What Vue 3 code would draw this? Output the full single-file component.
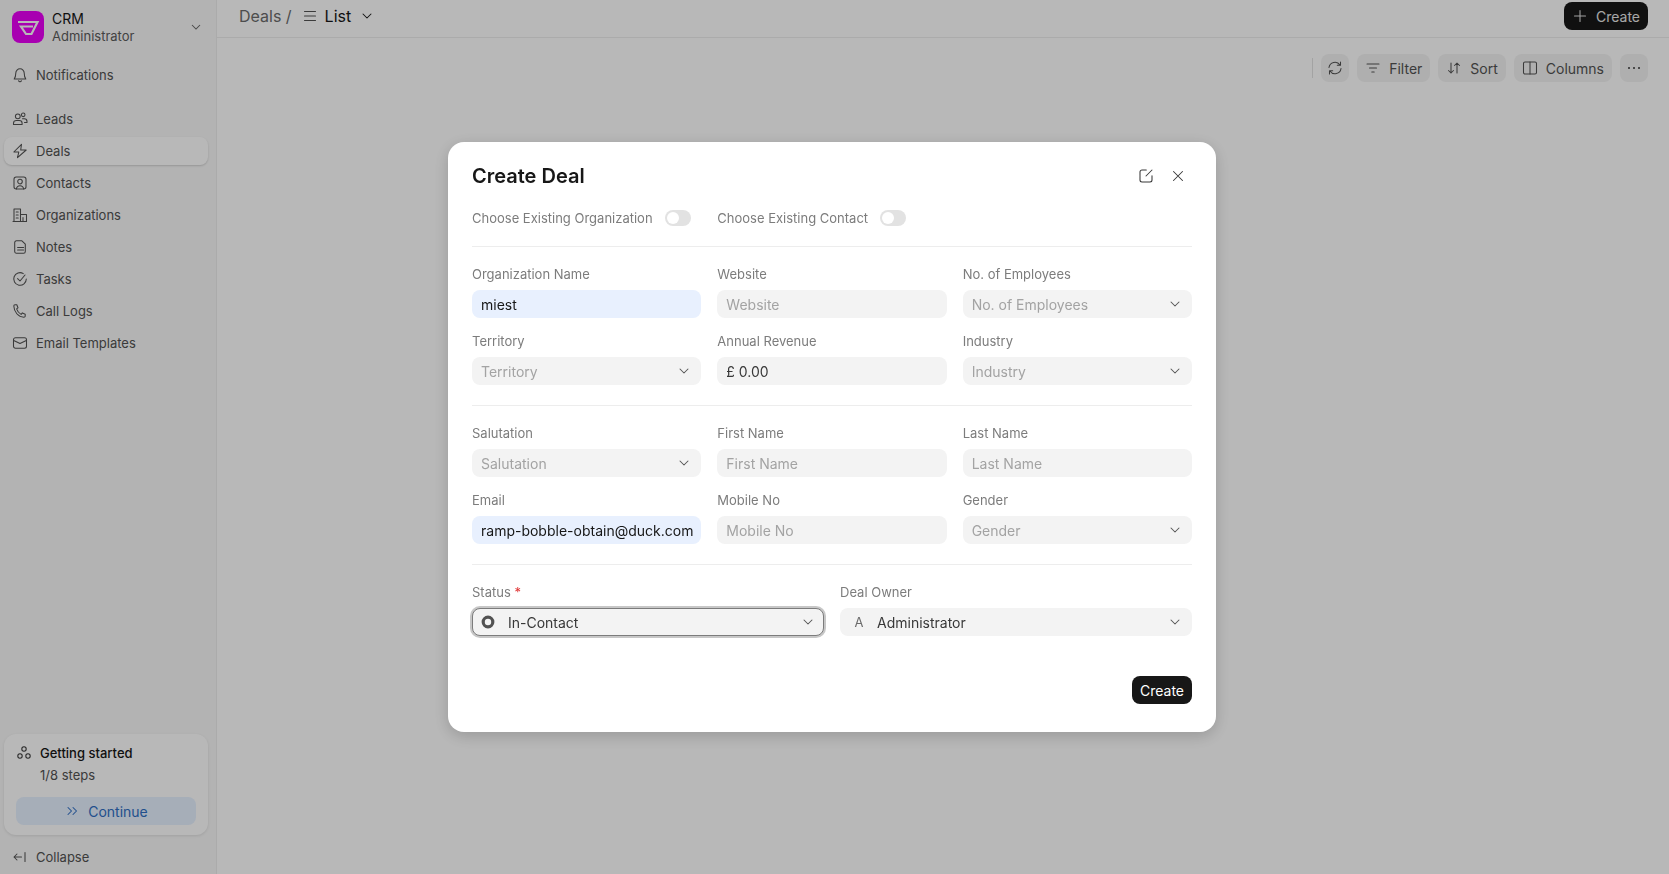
<script setup>
const navItems = [
  { label: 'Leads', icon: 'leads' },
  { label: 'Deals', icon: 'deals', active: true },
  { label: 'Contacts', icon: 'contacts' },
  { label: 'Organizations', icon: 'orgs' },
  { label: 'Notes', icon: 'notes' },
  { label: 'Tasks', icon: 'tasks' },
  { label: 'Call Logs', icon: 'calls' },
  { label: 'Email Templates', icon: 'email' },
]
const orgFields = [
  { label: 'Organization Name', value: 'miest', filled: true },
  { label: 'Website', placeholder: 'Website' },
  { label: 'No. of Employees', placeholder: 'No. of Employees', select: true },
  { label: 'Territory', placeholder: 'Territory', select: true },
  { label: 'Annual Revenue', value: '£ 0.00' },
  { label: 'Industry', placeholder: 'Industry', select: true },
]
const contactFields = [
  { label: 'Salutation', placeholder: 'Salutation', select: true },
  { label: 'First Name', placeholder: 'First Name' },
  { label: 'Last Name', placeholder: 'Last Name' },
  { label: 'Email', value: 'ramp-bobble-obtain@duck.com', filled: true },
  { label: 'Mobile No', placeholder: 'Mobile No' },
  { label: 'Gender', placeholder: 'Gender', select: true },
]
</script>

<template>
  <div class="app">
    <aside class="sidebar">
      <div class="brand">
        <svg class="logo" viewBox="0 0 32 32">
          <rect width="32" height="32" rx="8" fill="#e900f5" />
          <path d="M6 11H25.500L19.500 23H14L9 15.500H21" fill="none" stroke="#fff" stroke-width="2.200" stroke-linejoin="miter" />
        </svg>
        <div class="brand-text">
          <div class="brand-name">CRM</div>
          <div class="brand-user">Administrator</div>
        </div>
        <svg class="brand-chev" viewBox="0 0 16 16"><path d="M4 6l4 4 4-4" /></svg>
      </div>

      <div class="nav-item notif">
        <svg class="ico" viewBox="0 0 16 16"><path d="M8 1.800a4.200 4.200 0 0 0-4.200 4.200c0 3.600-.9 5-1.600 6h11.600c-.7-1-1.600-2.400-1.600-6A4.200 4.200 0 0 0 8 1.800zM6.600 13.800a1.500 1.500 0 0 0 2.800 0" /></svg>
        <span>Notifications</span>
      </div>

      <nav class="nav">
        <div v-for="item in navItems" :key="item.label" class="nav-item" :class="{ active: item.active }">
          <svg class="ico" viewBox="0 0 16 16">
            <template v-if="item.icon === 'leads'">
              <circle cx="5.800" cy="5.300" r="2.400" /><circle cx="11.200" cy="3.800" r="1.800" />
              <path d="M1.500 13.500v-1.300a2.800 2.800 0 0 1 2.800-2.800h3a2.800 2.800 0 0 1 2.800 2.800v1.300zM10.500 7.800h1.700a2.800 2.800 0 0 1 2.800 2.800v.9h-2.500" />
            </template>
            <path v-else-if="item.icon === 'deals'" d="M9.500 1.300L1.800 9h5l-1.300 5.700L14.200 7H8.700z" />
            <template v-else-if="item.icon === 'contacts'">
              <rect x="2" y="2" width="12" height="12" rx="2.200" /><circle cx="8" cy="6.600" r="2.300" />
              <path d="M4.400 14c.3-2.200 1.800-3.300 3.600-3.300s3.300 1.100 3.600 3.300" />
            </template>
            <path v-else-if="item.icon === 'orgs'" d="M2 14.500V2h6.500v12.500zM8.500 7.500H14.500v7H1M4.200 5h2M4.200 8h2M4.200 11h2M11 10.500v4" />
            <path v-else-if="item.icon === 'notes'" d="M4.400 1.800h5.500l3.400 3.400v7.300a1.700 1.700 0 0 1-1.700 1.700H4.400a1.700 1.700 0 0 1-1.700-1.700V3.500a1.700 1.700 0 0 1 1.700-1.700zM5.600 8.500h6M5.600 11h6" />
            <path v-else-if="item.icon === 'tasks'" d="M14.300 8a6.300 6.300 0 1 1-3-5.400M5.600 7.600L8 10l5-6" />
            <path v-else-if="item.icon === 'calls'" d="M3 1.800h1.800l1.200 3-1.400 1.100c.7 2.300 2.300 4.200 4.500 5.500l1.300-1.500 2.800 1.300v1.700a1.300 1.300 0 0 1-1.400 1.300C6.300 14 2 8.900 1.800 3.100A1.300 1.300 0 0 1 3 1.800z" />
            <template v-else-if="item.icon === 'email'">
              <rect x="1.500" y="2.700" width="13" height="10.600" rx="2" /><path d="M1.700 5.500L8 8.500l6.300-3" />
            </template>
          </svg>
          <span>{{ item.label }}</span>
        </div>
      </nav>

      <div class="spacer"></div>

      <div class="started">
        <div class="started-head">
          <svg class="ico dark" viewBox="0 0 16 16"><circle cx="8" cy="4" r="2.200" /><circle cx="4" cy="11" r="2.200" /><circle cx="12" cy="11" r="2.200" /></svg>
          <span>Getting started</span>
        </div>
        <div class="started-steps">1/8 steps</div>
        <div class="continue">
          <svg class="ico blue" viewBox="0 0 16 16"><path d="M4 4.500L7.500 8 4 11.500M9 4.500L12.500 8 9 11.500" /></svg>
          <span>Continue</span>
        </div>
      </div>
      <div class="nav-item collapse">
        <svg class="ico" viewBox="0 0 16 16"><path d="M9.500 8H2M5 5L2 8l3 3M13 3.500v9" /></svg>
        <span>Collapse</span>
      </div>
    </aside>

    <main class="main">
      <header class="topbar">
        <div class="crumbs">
          <span class="crumb-muted">Deals /</span>
          <svg class="ico list-ico" viewBox="0 0 16 16"><path d="M2.500 3.500h11M2.500 8h11M2.500 12.500h11" /></svg>
          <span class="crumb-current">List</span>
          <svg class="ico crumb-chev" viewBox="0 0 16 16"><path d="M4 6l4 4 4-4" /></svg>
        </div>
        <button class="btn-dark top-create">
          <svg class="ico light" viewBox="0 0 16 16"><path d="M8 2.500v11M2.500 8h11" /></svg>
          <span>Create</span>
        </button>
      </header>
      <div class="toolbar">
        <div class="tool-sep"></div>
        <button class="tool square">
          <svg class="ico" viewBox="0 0 16 16"><path d="M2 7.500A6 6 0 0 1 13 5M14 8.500A6 6 0 0 1 3 11M13.500 2v3.200h-3.200M2.500 14v-3.200h3.200" /></svg>
        </button>
        <button class="tool">
          <svg class="ico" viewBox="0 0 16 16"><path d="M2 4h12M4.500 8h7M6.800 12h2.400" /></svg><span>Filter</span>
        </button>
        <button class="tool">
          <svg class="ico" viewBox="0 0 16 16"><path d="M5 3v10M2.500 10.500L5 13l2.500-2.500M11 13V3M8.500 5.500L11 3l2.500 2.500" /></svg><span>Sort</span>
        </button>
        <button class="tool">
          <svg class="ico" viewBox="0 0 16 16"><rect x="1.500" y="2" width="13" height="12" rx="1.500" /><path d="M8 2v12" /></svg><span>Columns</span>
        </button>
        <button class="tool square">
          <svg class="ico" viewBox="0 0 16 16"><circle class="solid" cx="3" cy="8" r="1" /><circle class="solid" cx="8" cy="8" r="1" /><circle class="solid" cx="13" cy="8" r="1" /></svg>
        </button>
      </div>
    </main>

    <div class="overlay">
      <section class="modal">
        <div class="modal-head">
          <h2>Create Deal</h2>
          <div class="modal-actions">
            <svg class="ico dark" viewBox="0 0 16 16"><path d="M8.300 2H4a2 2 0 0 0-2 2v8a2 2 0 0 0 2 2h8a2 2 0 0 0 2-2V7.700M8 8l6-6" /></svg>
            <svg class="ico dark" viewBox="0 0 16 16"><path d="M3.500 3.500l9 9M12.500 3.500l-9 9" /></svg>
          </div>
        </div>

        <div class="toggles">
          <div class="toggle-row"><span>Choose Existing Organization</span><i class="switch"></i></div>
          <div class="toggle-row"><span>Choose Existing Contact</span><i class="switch"></i></div>
        </div>
        <hr />

        <div class="grid three">
          <div v-for="f in orgFields" :key="f.label" class="field">
            <label>{{ f.label }}</label>
            <div class="control" :class="{ filled: f.filled }">
              <span :class="f.value ? 'val' : 'ph'">{{ f.value || f.placeholder }}</span>
              <svg v-if="f.select" class="ico chev" viewBox="0 0 16 16"><path d="M4 6l4 4 4-4" /></svg>
            </div>
          </div>
        </div>
        <hr />

        <div class="grid three">
          <div v-for="f in contactFields" :key="f.label" class="field">
            <label>{{ f.label }}</label>
            <div class="control" :class="{ filled: f.filled }">
              <span :class="f.value ? 'val' : 'ph'">{{ f.value || f.placeholder }}</span>
              <svg v-if="f.select" class="ico chev" viewBox="0 0 16 16"><path d="M4 6l4 4 4-4" /></svg>
            </div>
          </div>
        </div>
        <hr />

        <div class="grid two">
          <div class="field">
            <label>Status <em>*</em></label>
            <div class="control focused">
              <svg class="status-dot" viewBox="0 0 16 16"><circle cx="8" cy="8" r="4.800" /></svg>
              <span class="val">In-Contact</span>
              <svg class="ico chev" viewBox="0 0 16 16"><path d="M4 6l4 4 4-4" /></svg>
            </div>
          </div>
          <div class="field">
            <label>Deal Owner</label>
            <div class="control">
              <span class="avatar">A</span>
              <span class="val">Administrator</span>
              <svg class="ico chev" viewBox="0 0 16 16"><path d="M4 6l4 4 4-4" /></svg>
            </div>
          </div>
        </div>

        <div class="modal-foot">
          <button class="btn-dark">Create</button>
        </div>
      </section>
    </div>
  </div>
</template>

<style>
html, body { margin: 0; height: 100%; background: #fff; overflow: hidden; }
</style>

<style scoped>
.app {
  display: flex;
  height: 874px;
  font-family: Inter, "Liberation Sans", sans-serif;
  font-size: 13px;
  color: #525252;
  background: #fff;
}
.ico { width: 16px; height: 16px; flex: none; fill: none; stroke: #525252; stroke-width: 1.05; stroke-linecap: round; stroke-linejoin: round; }
.ico.dark { stroke: #383838; }
.ico.light { stroke: #e2e2e2; }
.ico.blue { stroke: #2f6fc4; }
.solid { fill: #383838; stroke: none; }

.sidebar { width: 217px; flex: none; box-sizing: border-box; display: flex; flex-direction: column; background: #f8f8f8; border-right: 1px solid #ededed; padding: 0 8px 0 4px; }
.brand { display: flex; align-items: center; height: 32px; margin: 11px 0 18px 8px; }
.logo { width: 32px; height: 32px; flex: none; }
.brand-text { margin-left: 8px; flex: 1; }
.brand-name { font-size: 14px; line-height: 18px; font-weight: 420; color: #171717; }
.brand-user { font-size: 13px; line-height: 17px; color: #5c5c5c; }
.brand-chev { width: 16px; height: 16px; fill: none; stroke: #666; stroke-width: 1.050; margin-right: 4px; }
.nav-item { display: flex; align-items: center; gap: 8px; height: 28px; padding: 0 8px; }
.notif { margin-bottom: 16px; }
.nav { display: flex; flex-direction: column; gap: 4px; }
.active { background: #fff; border-radius: 8px; box-shadow: 0 1px 2px rgba(0,0,0,.16); }
.spacer { flex: 1; }
.started { background: #fff; border-radius: 12px; box-shadow: 0 1px 3px rgba(0,0,0,.10); padding: 9px 12px; height: 101px; box-sizing: border-box; }
.started-head { display: flex; align-items: center; gap: 8px; height: 20px; color: #171717; font-weight: 450; }
.started-steps { margin: 2px 0 0 24px; line-height: 20px; }
.continue { display: flex; align-items: center; justify-content: center; gap: 8px; height: 28px; margin-top: 12px; background: #e6f1ff; border-radius: 8px; color: #2f6fc4; font-size: 14px; }
.collapse { margin-top: 8px; margin-bottom: 3px; }

.main { flex: 1; min-width: 0; display: flex; flex-direction: column; }
.topbar { height: 38px; box-sizing: border-box; border-bottom: 1px solid #ededed; display: flex; align-items: flex-start; justify-content: space-between; padding: 2px 21px 0 22px; }
.crumbs { display: flex; align-items: center; height: 28px; font-size: 16px; }
.crumb-muted { color: #6b6b6b; }
.list-ico { margin-left: 10px; }
.crumb-current { margin-left: 7px; color: #171717; font-weight: 400; }
.crumb-chev { margin-left: 8px; stroke: #171717; }
.btn-dark { display: inline-flex; align-items: center; justify-content: center; gap: 8px; height: 28px; padding: 0 8px; background: #171717; border: 0; border-radius: 8px; color: #fff; font: inherit; font-size: 14px; }
.top-create { color: #e8e8e8; }
.toolbar { display: flex; align-items: center; justify-content: flex-end; gap: 8px; padding: 16px 21px 0 0; }
.tool-sep { width: 1px; height: 20px; background: #e2e2e2; }
.tool { display: inline-flex; align-items: center; gap: 8px; height: 28px; padding: 0 8px; background: #f3f3f3; border: 0; border-radius: 8px; font: inherit; font-size: 14px; color: #525252; }
.tool.square { width: 28px; padding: 0; justify-content: center; }

.overlay { position: fixed; inset: 0; background: rgba(0, 0, 0, 0.28); }
.modal { position: absolute; left: 448px; top: 142px; width: 768px; height: 590px; box-sizing: border-box; padding: 20px 24px; background: #fff; border-radius: 16px; box-shadow: 0 4px 16px rgba(0,0,0,.18); }
.modal-head { display: flex; align-items: center; justify-content: space-between; height: 28px; margin-bottom: 20px; }
.modal-head h2 { margin: 0; font-size: 20px; line-height: 28px; font-weight: 600; color: #171717; }
.modal-actions { display: flex; align-items: center; gap: 16px; padding-right: 6px; }
.toggles { display: flex; height: 16px; align-items: center; }
.toggle-row { display: flex; align-items: center; gap: 12px; color: #7c7c7c; }
.toggle-row:first-child { width: 245.33px; }
.switch { display: block; position: relative; width: 26px; height: 16px; border-radius: 8px; background: #e2e2e2; }
.switch::after { content: ""; position: absolute; left: 2px; top: 2px; width: 12px; height: 12px; border-radius: 50%; background: #fff; }
hr { border: 0; border-top: 1px solid #ededed; margin: 20px 0; }
.grid { display: grid; column-gap: 16px; row-gap: 16px; }
.three { grid-template-columns: repeat(3, minmax(0, 1fr)); }
.two { grid-template-columns: repeat(2, minmax(0, 1fr)); }
.field label { display: block; line-height: 15px; margin-bottom: 8px; color: #7c7c7c; }
.field em { font-style: normal; color: #e03636; }
.control { display: flex; align-items: center; gap: 8px; height: 28px; box-sizing: border-box; padding: 0 8px 0 9px; background: #f3f3f3; border-radius: 8px; font-size: 14px; overflow: hidden; white-space: nowrap; }
.filled { background: #e8f0fe; }
.filled .val { color: #171717; }
.ph { color: #a3a3a3; flex: 1; }
.val { color: #383838; flex: 1; }
.chev { stroke: #525252; margin-right: 1px; }
.focused { border: 1px solid #7c7c7c; box-shadow: 0 0 0 2px #c7c7c7; padding-left: 7px; gap: 12px; overflow: visible; }
.focused .chev { margin-left: -4px; margin-right: -1px; }
.status-dot { width: 16px; height: 16px; flex: none; fill: none; stroke: #525252; stroke-width: 3.2; }
.avatar { width: 20px; text-align: center; font-size: 13px; color: #6b6b6b; }
.modal-foot { display: flex; justify-content: flex-end; margin-top: 40px; }
.modal-foot .btn-dark { width: 60px; padding: 0; }
</style>
